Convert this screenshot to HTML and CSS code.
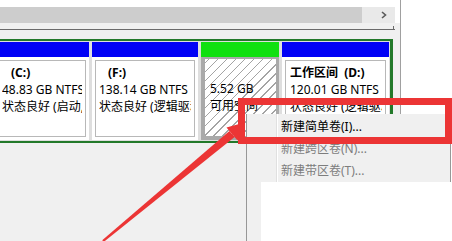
FILE: index.html
```html
<!DOCTYPE html>
<html>
<head>
    <meta charset='UTF-8'>
    <title>磁盘管理</title>
    <link rel="stylesheet" href="styles.css">
</head>
<body>
    <div class='pane'>
        <div class='scroll-area'>
            <div class='hscroll'>
                <div class='thumb'></div>
                <div class='track'>
                    <svg width='8' height='8' viewBox='0 0 8 8'><polyline points='2,1 5.5,4 2,7' fill='none' stroke='#5a5a5a' stroke-width='1.6'/></svg>
                </div>
            </div>
        </div>
        <div class='ruler'><div class='tick'></div></div>
        <div class='disk'>
            <div class='part part-c'>
                <div class='head'></div>
                <div class='body'><div class='inner'><div class='txt'>
                    <b class='label'>(C:)</b><br>48.83 GB NTFS<br>状态良好 (启动, 页面文件)
                </div></div></div>
            </div>
            <div class='part part-f'>
                <div class='head'></div>
                <div class='body'><div class='inner'><div class='txt'>
                    <b class='label'>(F:)</b><br>138.14 GB NTFS<br>状态良好 (逻辑驱动器)
                </div></div></div>
            </div>
            <div class='part part-free'>
                <div class='head'></div>
                <div class='body'><div class='inner'><div class='txt'>
                    &nbsp;<br>5.52 GB<br>可用空间
                </div></div></div>
            </div>
            <div class='part part-d'>
                <div class='head'></div>
                <div class='body'><div class='inner'><div class='txt'>
                    <b>工作区间 &nbsp;(D:)</b><br>120.01 GB NTFS<br>状态良好 (逻辑驱动器)
                </div></div></div>
            </div>
        </div>
    </div>

    <div class='menu'>
        <div class='item'>新建简单卷(I)...</div>
        <div class='item off'>新建跨区卷(N)...</div>
        <div class='item off'>新建带区卷(T)...</div>
    </div>
    <div class='blank'></div>
    <div class='callout'></div>
    <svg class='pointer' width='452' height='241' viewBox='0 0 452 241'>
        <polygon points='102.2,240.3 229.4,130.9 234.6,137.1 103.9,241.8' fill='#ec3535'/>
        <polygon points='244.5,122.5 226.5,127.5 237.5,140.5' fill='#ec3535'/>
    </svg>
</body>
</html>
```

FILE: styles.css
```css
* { box-sizing: border-box; }
body {
    margin: 0;
    width: 452px;
    height: 241px;
    overflow: hidden;
    position: relative;
    background: #fff;
    font-family: "Noto Sans", "Noto Sans CJK SC", sans-serif;
    font-size: 12px;
    color: #000;
}
.pane { width: 401px; height: 241px; background: #f0f0f0; border-right: 1px solid #a0a0a0; }
.scroll-area { background: #fff; padding-top: 7px; }
.hscroll { display: flex; width: 395px; height: 16px; }
.thumb { width: 362px; background: #cdcdcd; }
.track { flex: 1; background: #e9e9e9; display: flex; align-items: center; justify-content: flex-end; padding-right: 7px; }
.track svg { display: block; }
.ruler {
    width: 395px;
    height: 7px;
    border-bottom: 1px solid #6a6a6a;
    display: flex;
    justify-content: flex-end;
    align-items: flex-end;
}
.tick { width: 1px; height: 3px; background: #6a6a6a; margin-right: 1px; }

.disk {
    display: flex;
    gap: 3px;
    width: 398px;
    height: 104px;
    margin: 9px 0 0 -5px;
    padding: 1px 1px 1px 0;
    border: 2px solid #23792a;
    border-left: 0;
    border-right-width: 3px;
    background: #dedede;
}
.part { display: flex; flex-direction: column; }
.part-c { width: 94px; }
.part-f { width: 106px; }
.part-free { width: 78px; }
.part-d { width: 107px; }
.head { height: 15px; background: #0000f6; }
.part-free .head { background: #10e010; }
.body { flex: 1; background: #fff; padding: 3px; }
.inner { height: 100%; border: 1px solid #b8b8b8; padding: 3px 3px 0; }
.part-d .inner { padding-left: 4px; }
.txt { line-height: 17px; white-space: nowrap; overflow: hidden; }
.label { margin-left: 9px; }

.part-free .body { background: #a9a9a9; padding: 2px 3px 4px 4px; }
.part-free .inner {
    border: 0;
    padding: 4px 0 0 5px;
    background: repeating-linear-gradient(-45deg, #fff 0 5.4px, #a4a4a4 5.4px 6.4px);
}

.menu {
    position: absolute;
    left: 246px;
    top: 114px;
    width: 205px;
    height: 127px;
    padding-top: 2px;
    border-left: 1px solid #979797;
    border-right: 1px solid #979797;
    background: linear-gradient(to right, transparent 29px, #e0e0e0 29px 30px, #fff 30px 31px, transparent 31px), #f0f0f0;
}
.item { height: 22px; line-height: 22px; padding-left: 34px; }
.item.off { color: #7d7d7d; }
.blank { position: absolute; left: 261px; top: 182px; right: 0; bottom: 0; background: #fff; }
.callout {
    position: absolute;
    left: 238px;
    top: 98px;
    width: 214px;
    height: 46px;
    border: 7px solid #ec3535;
}
.pointer { position: absolute; left: 0; top: 0; pointer-events: none; }
```
